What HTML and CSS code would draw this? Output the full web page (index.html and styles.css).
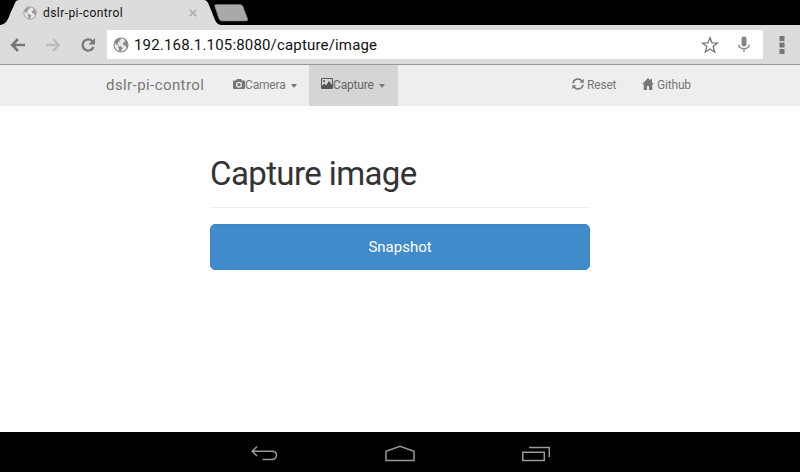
FILE: index.html
```html
<!DOCTYPE html>
<html lang="en">
<head>
<meta charset="utf-8">
<title>dslr-pi-control</title>
<link rel="stylesheet" href="styles.css">
</head>
<body>
<svg class="defs" width="0" height="0">
  <symbol id="globe" viewBox="0 0 16 16">
    <circle cx="8" cy="8" r="7" fill="#e9e9e9" stroke="currentColor" stroke-width="1.100"/>
    <path fill="currentColor" d="M2 4.500Q4 1 7.500 1.200L8 2.500 6.200 3.200l.6 1L5 5.500 4.500 7l1.300 1-.6.6L3.600 7.400 1.500 6zM5 9.500l2.500-.3L9.800 11l-1.600 2-.6 1.800-1.500-.6-.1-2.100zM11 2l2.300 1.800 1.500 2.700v2.600L13.400 11l-.8-2.300-2-.5-.7-1.700L11 5l1.300-.5z"/>
  </symbol>
</svg>
<header class="tabstrip">
  <svg class="tab-shape" width="260" height="25" viewBox="0 0 260 25">
    <path fill="#dcdcdc" d="M0 25C6 24 8 20 10 14L15 3Q16 0 19 0H204Q207 0 209 5L215 20Q217 25 222 25z"/>
    <path fill="#a9a9a9" stroke="#777" stroke-width=".6" d="M216 4.500h24q2 0 3 2l4.500 12q.8 2.500-1.500 2.500h-24q-2 0-3-2l-4-12q-1-2.500 1-2.500z"/>
  </svg>
  <div class="tab">
    <svg class="tab-globe" width="14" height="14"><use href="#globe"/></svg>
    <span class="tab-title">dslr-pi-control</span>
    <svg class="tab-close" width="8" height="8" viewBox="0 0 8 8"><path d="M.7.700l6.600 6.600M7.300.7.700 7.300" stroke="#aaa" stroke-width="1.500"/></svg>
  </div>
</header>
<div class="toolbar">
  <svg class="back" width="16" height="16" viewBox="0 0 16 16"><path d="M8 2 2.200 8 8 14M2.500 8H15" fill="none" stroke="#777" stroke-width="2.600"/></svg>
  <svg class="forward" width="16" height="16" viewBox="0 0 16 16"><path d="m8 2 5.800 6L8 14M13.500 8H1" fill="none" stroke="#bcbcbc" stroke-width="2.400"/></svg>
  <svg class="reload" width="16" height="16" viewBox="0 0 16 16"><path d="M12.300 4.200A5.600 5.600 0 1 0 13.400 10" fill="none" stroke="#777" stroke-width="2.300"/><path fill="#777" d="M15 1v6.500H8.500z"/></svg>
  <div class="omnibox">
    <svg class="url-globe" width="16" height="16"><use href="#globe"/></svg>
    <span class="url">192.168.1.105:8080/capture/image</span>
    <svg class="star" width="18" height="18" viewBox="0 0 18 18"><path d="m9 1.700 2 5.100 5.500.3-4.300 3.500 1.500 5.400L9 13l-4.700 3 1.500-5.400L1.500 7.100l5.500-.3z" fill="none" stroke="#777" stroke-width="1.300"/></svg>
    <svg class="mic" width="12" height="17" viewBox="0 0 12 17"><rect x="3.500" y=".5" width="5" height="10" rx="2.300" fill="#858585"/><path d="M.8 8.500C1 14 11 14 11.200 8.500M6 12.500V16" fill="none" stroke="#858585" stroke-width="1.300"/></svg>
  </div>
  <svg class="menu" width="6" height="18" viewBox="0 0 6 18"><path fill="#777" d="M.5 0h5v5h-5zm0 6.500h5v5h-5zm0 6.500h5v5h-5z"/></svg>
</div>
<nav class="navbar">
  <a class="brand">dslr-pi-control</a>
  <a class="item camera"><svg width="12" height="10" viewBox="0 0 12 10"><path fill="currentColor" fill-rule="evenodd" d="M1 1.500h2L4 0h4l1 1.500h2q1 0 1 1V9q0 1-1 1H1Q0 10 0 9V2.500q0-1 1-1zM6 2.700a3 3 0 1 0 0 6 3 3 0 0 0 0-6z"/><circle cx="6" cy="5.700" r="1.700" fill="currentColor"/></svg><span>Camera</span><i class="caret"></i></a>
  <a class="item capture"><svg width="12" height="11" viewBox="0 0 12 11"><path d="M.5.500h11v10H.5z" fill="none" stroke="currentColor"/><path fill="currentColor" d="M1 10V8l2.300-2.500L5 7.500 8 3l3 4v3z"/><circle cx="3" cy="3" r="1.100" fill="currentColor"/></svg><span>Capture</span><i class="caret"></i></a>
  <a class="item reset"><svg width="12" height="12" viewBox="0 0 12 12"><path d="M1 5.300C1.500.8 7-.3 10 3M11 6.700C10.500 11.200 5 12.300 2 9" fill="none" stroke="currentColor" stroke-width="1.500"/><path fill="currentColor" d="M11.700.7v4.100H7.600zM.3 11.300V7.200h4.100z"/></svg><span>Reset</span></a>
  <a class="item github"><svg width="12" height="12" viewBox="0 0 12 12"><path fill="currentColor" d="M6 0 0 6.300h1.700V12H5V8h2v4h3.300V6.300H12L10 4.200V1H8.300v1.400z"/></svg><span>Github</span></a>
</nav>
<main>
  <h1><span>Capture image</span></h1>
  <button type="button"><span>Snapshot</span></button>
</main>
<footer class="system">
  <svg width="28" height="17" viewBox="0 0 28 17"><path d="M7 1.500 2.200 6.200 7 11M2.500 6.200H22c6 0 6 8.300 0 8.300h-9.500"/></svg>
  <svg width="32" height="17" viewBox="0 0 32 17"><path d="M2 15.500V6.200l14-5 14 5v9.300z"/></svg>
  <svg width="30" height="17" viewBox="0 0 30 17"><path d="M.8 7.200h21.500v8.300H.8zM7 2.500h20.300V12"/></svg>
</footer>
</body>
</html>
```
FILE: styles.css
```css
* { box-sizing: border-box; }
body { margin: 0; width: 800px; height: 472px; overflow: hidden; display: flex; flex-direction: column; background: #fff; font-family: Roboto, sans-serif; }
svg { display: block; flex: none; }
.defs { position: absolute; }
span, .brand { white-space: nowrap; }
.tabstrip { height: 25px; flex: none; position: relative; background: #000; }
.tab-shape { position: absolute; left: 0; top: 0; }
.tab { position: relative; height: 25px; display: flex; align-items: center; padding-left: 23px; color: #999; }
.tab-title { margin-left: 6px; width: 80px; font-size: 12px; color: #111; letter-spacing: .43px; }
.tab-close { margin-left: 66px; }
.toolbar { height: 40px; flex: none; display: flex; align-items: center; background: #dcdcdc; border-bottom: 1px solid #999; padding-left: 10px; }
.forward { margin-left: 19px; }
.reload { margin-left: 19px; }
.omnibox { width: 656px; height: 29px; margin-left: 11px; padding-left: 6px; background: #fff; border-radius: 1px; display: flex; align-items: center; color: #888; }
.url { margin-left: 5px; width: 567px; padding-top: 1px; font-size: 15px; color: #111; letter-spacing: .17px; }
.mic { margin-left: 19px; }
.menu { margin-left: 16px; }
.navbar { height: 41px; flex: none; display: flex; background: #eee; color: #777; padding-left: 106px; }
.brand { width: 115px; font-size: 15px; line-height: 40px; letter-spacing: .42px; }
.item { display: flex; align-items: center; font-size: 12px; letter-spacing: -.18px; height: 40px; padding-left: 12px; }
.item svg { margin-bottom: 3px; }
.caret { border: 3.500px solid transparent; border-top: 4px solid currentColor; border-bottom: 0; margin: 1px 0 0 5px; }
.camera { width: 88px; }
.capture { width: 89px; height: 41px; padding-bottom: 1px; background: #d5d5d5; color: #555; }
.capture span, .capture .caret { color: #777; }
.capture span { color: #666; }
.reset { width: 70px; margin-left: 162px; }
.reset span, .github span { margin-left: 3px; }
main { width: 380px; margin: 0 auto; flex: 1; }
h1 { margin: 0 0 16px; height: 102px; padding-top: 48px; border-bottom: 1px solid #eee; font-size: 33px; font-weight: 400; line-height: 40px; color: #333; letter-spacing: -.6px; }
button { display: block; width: 380px; height: 46px; padding: 0; background: #428bca; border: 1px solid #3d86c6; border-radius: 5px; color: #fff; font: 15px Roboto, sans-serif; }
.system { height: 40px; flex: none; background: #000; display: flex; align-items: center; justify-content: center; gap: 106px; padding: 2px 0 0 1px; }
.system path { fill: none; stroke: #999; stroke-width: 1.500; }
```
